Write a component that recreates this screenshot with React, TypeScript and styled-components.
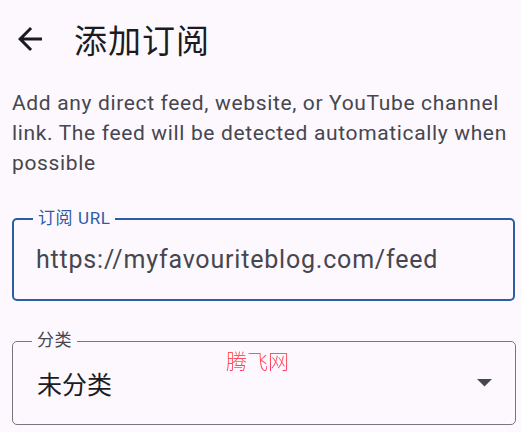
import React from "react";
import styled, { createGlobalStyle } from "styled-components";

const GlobalStyle = createGlobalStyle`
  html, body {
    margin: 0;
    padding: 0;
    background: #fcf8fd;
  }
  body {
    font-family: Roboto, "Noto Sans CJK SC", sans-serif;
  }
`;

const Page = styled.div`
  width: 521px;
  height: 432px;
  overflow: hidden;
  background: #fcf8fd;
  color: #1b1b21;
`;

const TopBar = styled.header`
  height: 78px;
  display: flex;
  align-items: center;
  padding: 0 0 0 12px;
`;

const BackButton = styled.button`
  width: 36px;
  height: 36px;
  border: none;
  background: transparent;
  padding: 0;
  display: flex;
  align-items: center;
  justify-content: center;
  color: #1b1b21;
  cursor: pointer;
`;

const Title = styled.h1`
  margin: 0 0 0 26px;
  font-size: 33px;
  font-weight: 400;
  font-family: "Noto Sans CJK SC", sans-serif;
  color: #1b1b21;
  letter-spacing: 1px;
`;

const Content = styled.main`
  padding: 10px 6px 0 12px;
  display: flex;
  flex-direction: column;
  gap: 40px;
`;

const Description = styled.p`
  margin: 0;
  font-size: 21px;
  line-height: 30px;
  color: #46464f;
  letter-spacing: 0.65px;
`;

const Field = styled.div<{ $focused?: boolean }>`
  position: relative;
  height: ${({ $focused }) => ($focused ? "83px" : "84px")};
  box-sizing: border-box;
  border: ${({ $focused }) => ($focused ? "2px solid #2c5ca5" : "1px solid #777680")};
  border-radius: 5px;
  display: flex;
  align-items: center;
  padding: ${({ $focused }) => ($focused ? "0 22px" : "0 23px 0 24px")};
  margin-right: ${({ $focused }) => ($focused ? "0" : "-1px")};
`;

const FieldLabel = styled.span<{ $focused?: boolean }>`
  position: absolute;
  top: -12px;
  left: 19px;
  padding: 0 5px;
  background: #fcf8fd;
  font-size: 17px;
  line-height: 20px;
  letter-spacing: 0.6px;
  color: ${({ $focused }) => ($focused ? "#2c5ca5" : "#46464f")};
  font-family: Roboto, "Noto Sans CJK SC", sans-serif;
`;

const FieldValue = styled.span`
  flex: 1;
  font-size: 25px;
  color: #46464f;
  letter-spacing: 0.8px;
`;

const SelectValue = styled.span`
  flex: 1;
  font-size: 25px;
  color: #1b1b21;
  font-family: "Noto Sans CJK SC", sans-serif;
`;

const Watermark = styled.span`
  position: absolute;
  top: 3px;
  left: 213px;
  font-size: 21px;
  font-weight: 300;
  font-family: "Noto Sans CJK SC", sans-serif;
  background: linear-gradient(180deg, #ff6a4d 0%, #ff2a6a 100%);
  -webkit-background-clip: text;
  background-clip: text;
  color: transparent;
`;

const ArrowBack = () => (
  <svg width="36" height="36" viewBox="0 0 24 24" fill="currentColor">
    <path d="M20 11H7.83l5.59-5.59L12 4l-8 8 8 8 1.41-1.41L7.83 13H20v-2z" />
  </svg>
);

const DropTriangle = () => (
  <svg width="15" height="8" viewBox="0 0 15 8">
    <path d="M0 0h15L7.5 7.5z" fill="#46464f" />
  </svg>
);

const App: React.FC = () => {
  return (
    <Page>
      <GlobalStyle />
      <TopBar>
        <BackButton aria-label="back">
          <ArrowBack />
        </BackButton>
        <Title>添加订阅</Title>
      </TopBar>
      <Content>
        <Description>
          Add any direct feed, website, or YouTube channel link. The feed will
          be detected automatically when possible
        </Description>
        <Field $focused>
          <FieldLabel $focused>订阅 URL</FieldLabel>
          <FieldValue>https://myfavouriteblog.com/feed</FieldValue>
        </Field>
        <Field>
          <FieldLabel>分类</FieldLabel>
          <Watermark>腾飞网</Watermark>
          <SelectValue>未分类</SelectValue>
          <DropTriangle />
        </Field>
      </Content>
    </Page>
  );
};

export default App;
